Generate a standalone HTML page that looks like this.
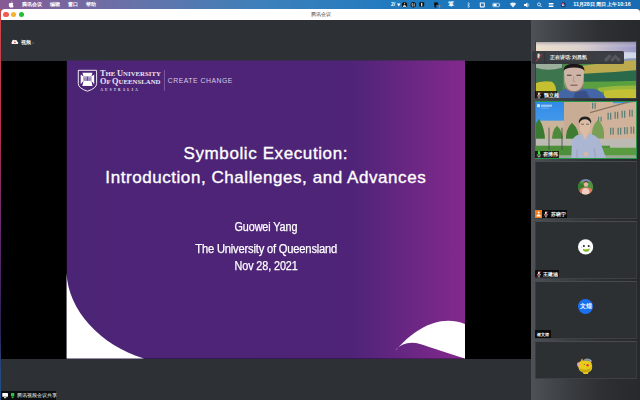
<!DOCTYPE html>
<html><head><meta charset="utf-8">
<style>
*{margin:0;padding:0;box-sizing:border-box}
html,body{width:640px;height:400px;overflow:hidden;background:#2d3034;font-family:"Liberation Sans",sans-serif}
.a{position:absolute}
#menubar{left:0;top:0;width:640px;height:20px;background:linear-gradient(90deg,#875a94 0%,#6872a8 20.3%,#3f80ba 40%,#1f7ac0 62.5%,#1a6fb4 88%,#1a6cb2 100%)}
#wallL{left:0;top:9px;width:1px;height:391px;background:linear-gradient(180deg,#d04a48 0%,#b83050 30%,#6a2a70 55%,#2a2050 82%,#24487e 92%,#1f4f8f 100%)}
#wallR{left:639px;top:10px;width:1px;height:4px;background:#1f78c6}
#win{left:1px;top:9.1px;width:639px;height:391px;background:#2d3034;border-radius:3.5px 3.5px 0 0;overflow:hidden}
#title{left:0;top:0;width:639px;height:10.7px;background:#fff}
.tl{top:3.2px;width:5.2px;height:5.2px;border-radius:50%}
.mt{color:#fff;font-size:5.2px;top:2.2px;line-height:5.5px;white-space:nowrap;font-weight:bold}
.st{left:66.6px;width:398.4px;text-align:center;color:#fff;white-space:nowrap;line-height:1}
.sx{display:inline-block;-webkit-text-stroke:.25px #fff}
.tile{left:535px;width:102px;background:#2d3033;overflow:hidden;border:1px solid;border-color:#474a4f #36393d #3d4044 #3a3d41}
.lt{font-size:4.6px;line-height:5.5px;color:#fff;white-space:nowrap;font-weight:bold}
.lab{background:rgba(0,0,0,.78);height:7.3px;color:#fff;font-size:5.5px;line-height:7px;white-space:nowrap;overflow:hidden}
</style></head><body>
<div id="menubar" class="a"></div>
<!-- menu text -->
<svg class="a" style="left:0;top:0" width="640" height="10" viewBox="0 0 640 10">
  <path d="M11,3.2 C10.2,2.6 8.8,2.8 8.8,4.8 C8.8,6.4 9.8,7.6 10.4,7.6 C10.8,7.6 11,7.4 11.3,7.4 C11.6,7.4 11.9,7.6 12.3,7.6 C12.9,7.6 13.5,6.4 13.6,6 C12.6,5.4 12.8,4 13.4,3.4 C12.8,2.6 11.8,2.8 11,3.2 Z M11.1,2.8 C11.1,2 11.7,1.6 12.1,1.6 C12.1,2.3 11.6,2.8 11.1,2.8 Z" fill="#fff"/>
</svg>
<div class="a mt" style="left:21.5px;font-weight:bold">腾讯会议</div>
<div class="a mt" style="left:49.8px">编辑</div>
<div class="a mt" style="left:67.9px">窗口</div>
<div class="a mt" style="left:85.9px">帮助</div>
<!-- status icons -->
<div class="a mt" style="left:391px;font-size:5px">2/</div>
<svg class="a" style="left:380px;top:0" width="260" height="10" viewBox="380 0 260 10">
  <path d="M397,3.5 L400.5,3.5 L398.8,6.5 Z" fill="#fff"/>
  <circle cx="404.5" cy="4.8" r="2.7" fill="#151515"/><path d="M403,6.6 Q404.5,4 406,6.6 Z M404.5,2.8 V4.2" stroke="#eee" stroke-width=".7" fill="#eee"/>
  <circle cx="413.3" cy="4.8" r="2.7" fill="#151515"/><path d="M412.3,3 Q411.6,5 412.8,6.6 M414.2,3.4 V6.4" stroke="#eee" stroke-width=".8" fill="none"/>
  <path d="M419.2,2.3 H424.2 V6 Q421.7,8.2 419.2,6 Z" fill="#151515"/><rect x="421" y="3" width="1.3" height="3.4" fill="#ddd"/>
  <path d="M434,2.6 L437.5,2.2 L438.5,4.5 L436,5.2 L436.5,7.5 L434.5,7.5 Z" fill="#111"/>
  <path d="M439.5,5 L439.5,8.5 M438.3,6.3 L439.5,5 L440.7,6.3" stroke="#f06a1a" stroke-width=".9" fill="none"/>
  <path d="M468.2,2.6 L469.8,4 L468.2,5.2 L469.8,6.4 L468.2,7.6 Z" fill="none" stroke="#fff" stroke-width=".5"/>
  <rect x="479.8" y="2.4" width="5" height="5" rx=".8" fill="#fff"/><rect x="480.8" y="3.4" width="3" height="3" fill="#2a76c2"/>
  <rect x="492.8" y="3.3" width="6.5" height="3.4" rx=".6" fill="none" stroke="#fff" stroke-width=".6"/><rect x="493.4" y="3.9" width="3.2" height="2.2" fill="#fff"/><rect x="499.5" y="4.3" width=".6" height="1.4" fill="#fff"/>
  <path d="M509.8,3.8 Q513,1 516.2,3.8 L513,7.4 Z" fill="#fff" opacity=".9"/>
  <path d="M524,4 H525.5 L527.5,2.5 V7.5 L525.5,6 H524 Z" fill="#fff"/><path d="M528.3,3.5 Q529.4,5 528.3,6.5" stroke="#fff" stroke-width=".5" fill="none"/>
  <circle cx="539" cy="4.4" r="1.5" fill="none" stroke="#fff" stroke-width=".7"/><path d="M540.1,5.5 L541.6,7" stroke="#fff" stroke-width=".8"/>
  <rect x="548.6" y="3" width="5" height="1.4" rx=".7" fill="#fff"/><rect x="548.6" y="5.6" width="5" height="1.4" rx=".7" fill="#fff"/>
  <circle cx="563.3" cy="4.8" r="2.5" fill="#2a2a50"/><circle cx="562.8" cy="4.2" r="1.4" fill="#c03a90"/><circle cx="563" cy="5.3" r="1" fill="#e8e8ff"/><circle cx="564.2" cy="5.3" r=".7" fill="#3aa0d0"/>
</svg>
<div class="a mt" style="left:448px;font-weight:bold;font-size:5.5px">箪</div>
<div class="a mt" style="left:573.3px;font-size:5.3px;letter-spacing:-.04px">11月28日 周日 上午10:16</div>

<div id="wallL" class="a"></div>
<div id="wallR" class="a"></div>
<div id="win" class="a">
  <div id="title" class="a">
    <div class="a tl" style="left:2.4px;background:#f25a52"></div>
    <div class="a tl" style="left:9.9px;background:#f6b42c"></div>
    <div class="a tl" style="left:17.6px;background:#24c034"></div>
    <div class="a" style="left:310px;top:3px;font-size:4.9px;line-height:5.5px;color:#3c3c3c">腾讯会议</div>
  </div>
</div>
<!-- info line -->
<svg class="a" style="left:10px;top:38px" width="10" height="8" viewBox="10 38 10 8">
  <path d="M12.3,44.1 H17.4 C18.5,44.1 18.6,42.1 17.4,42 C17.5,40.4 15.9,39.5 14.7,40.3 C13.7,39.2 11.9,39.9 12.1,41.7 C11.1,41.9 11.2,44.1 12.3,44.1 Z" fill="#f4f4f4"/>
  <circle cx="14.9" cy="42.3" r=".9" fill="#e85050"/>
</svg>
<div class="a" style="left:21px;top:39.5px;font-size:5px;line-height:5.5px;color:#eee;white-space:nowrap;font-weight:bold">视频<span style="font-size:3.5px;color:#aaa;font-weight:normal"> ≈</span></div>

<!-- share area -->
<div class="a" style="left:1px;top:60.5px;width:530px;height:298.5px;background:#000"></div>
<svg class="a" style="left:0;top:0" width="640" height="400" viewBox="0 0 640 400">
  <defs>
    <linearGradient id="pg" x1="0" x2="1" y1="0" y2="0">
      <stop offset="0" stop-color="#4c2476"/>
      <stop offset="0.72" stop-color="#4f2478"/>
      <stop offset="1" stop-color="#84298e"/>
    </linearGradient>
  </defs>
  <rect x="66.8" y="60.5" width="398.2" height="298.2" fill="url(#pg)"/>
  <path d="M66.6,273 C68,310 100,345 144,358.6 L66.6,358.6 Z" fill="#fff"/>
  <path d="M395.4,350.7 C415,328 440,314 465,324 L465,358.6 C450,354 430,347 420,344 C410,341 400,344 395.4,350.7 Z" fill="#fff"/>
  <!-- crest -->
  <path d="M78.3,70.3 H96.6 V83.5 Q96.6,88.3 87.45,91.2 Q78.3,88.3 78.3,83.5 Z" fill="none" stroke="#fff" stroke-width=".9"/>
  <path d="M82.4,72.8 L92.5,72.8 L91.4,76.6 L94.2,74.6 L94.2,84.2 L91.4,80.7 L92.5,86 L82.4,86 L83.5,80.7 L80.7,84.2 L80.7,74.6 L83.5,76.6 Z" fill="#fff"/>
  <rect x="83.5" y="76.6" width="7.9" height="4.1" fill="#6a4a92"/>
  <path d="M84,77.5 H91 M84,78.65 H91 M84,79.8 H91" stroke="#fff" stroke-width=".45"/>
  <path d="M87.45,76.6 V80.7" stroke="#4c2476" stroke-width=".7"/>
  <line x1="164.4" y1="70" x2="164.4" y2="90.8" stroke="#9a82b8" stroke-width=".6"/>
</svg>
<div class="a" id="uq1" style="left:100px;top:70.2px;font-family:'Liberation Serif',serif;font-weight:bold;font-size:6.8px;line-height:7.7px;color:#ece4f2;white-space:nowrap;letter-spacing:0px"><span style="font-size:8.3px">T</span>HE <span style="font-size:8.3px">U</span>NIVERSITY<br><span style="font-size:8.3px">O</span>F <span style="font-size:8.3px">Q</span>UEENSLAND</div>
<div class="a" style="left:100.5px;top:87.6px;font-family:'Liberation Serif',serif;font-weight:bold;font-size:3.3px;line-height:4px;color:#f0e8f4;white-space:nowrap;letter-spacing:2.2px">AUSTRALIA</div>
<div class="a" style="left:167.8px;top:77.2px;font-size:6.8px;line-height:7px;color:#d8cde6;white-space:nowrap;letter-spacing:.54px">CREATE CHANGE</div>

<!-- slide text -->
<div class="a st" style="top:144.6px;font-size:17px;letter-spacing:.6px;-webkit-text-stroke:.35px #fff">Symbolic Execution:</div>
<div class="a st" style="top:168.8px;font-size:17px;letter-spacing:.56px;-webkit-text-stroke:.35px #fff">Introduction, Challenges, and Advances</div>
<div class="a st" style="top:221px;font-size:12px"><span class="sx" style="transform:scaleX(.9);letter-spacing:-.1px">Guowei Yang</span></div>
<div class="a st" style="top:243.3px;font-size:12px"><span class="sx" style="transform:scaleX(.93);letter-spacing:-.2px">The University of Queensland</span></div>
<div class="a st" style="top:260px;font-size:12px"><span class="sx" style="transform:scaleX(.9);letter-spacing:-.1px">Nov 28, 2021</span></div>

<!-- bottom-left label -->
<div class="a" style="left:1.4px;top:391.2px;width:55px;height:9px;background:rgba(0,0,0,.75)"></div>
<svg class="a" style="left:0;top:390px" width="20" height="10" viewBox="0 390 20 10">
  <rect x="2.3" y="393" width="5.7" height="3.8" rx=".4" fill="#fff"/><rect x="4" y="397.2" width="2.3" height="1" fill="#fff"/>
  <path d="M11,393 H14.3 V396 H11 Z M10.8,396.4 H14.5 L12.65,398.6 Z" fill="#2ec040"/>
</svg>
<div class="a" style="left:16.9px;top:393.2px;font-size:4.6px;line-height:5.5px;color:#fff;white-space:nowrap">腾讯视频会议共享</div>

<!-- right panel -->
<div class="a" style="left:531px;top:19.7px;width:109px;height:381px;background:linear-gradient(90deg,#4e5156 0%,#3a3d41 35%,#2d2f33 65%,#27292d 100%)"></div>

<!-- tile1 -->
<div class="a tile" style="top:41.3px;height:57.8px">
<svg width="100" height="56" viewBox="536 42.3 100 56" style="display:block">
  <defs>
    <linearGradient id="sky1" x1="0" x2="1" y1="0" y2="0"><stop offset="0" stop-color="#f0e2cc"/><stop offset=".45" stop-color="#dcd0cc"/><stop offset="1" stop-color="#9494c8"/></linearGradient>
    <linearGradient id="sky1v" x1="0" x2="0" y1="0" y2="1"><stop offset="0" stop-color="#5a5468" stop-opacity="1"/><stop offset=".5" stop-color="#7a7088" stop-opacity=".6"/><stop offset="1" stop-color="#fff" stop-opacity="0"/></linearGradient>
    <filter id="bl1" x="-10%" y="-10%" width="120%" height="120%"><feGaussianBlur stdDeviation=".7"/></filter>
  </defs>
  <g filter="url(#bl1)">
  <rect x="530" y="36" width="112" height="68" fill="url(#sky1)"/>
  <rect x="530" y="36" width="112" height="12" fill="url(#sky1v)"/>
  <path d="M596,54 Q620,52 642,53 V66 H596 Z" fill="#d2d8ea"/><path d="M620,60 Q630,58 642,59 V64 H620 Z" fill="#8a98b8"/>
  <rect x="530" y="62" width="112" height="42" fill="#4a8a48"/>
  <path d="M583,66 Q610,62 642,60 V72 Q612,75 583,75 Z" fill="#bcaa50"/>
  <path d="M583,74 Q612,73 642,70 V82 Q612,84 583,83 Z" fill="#2a6a4c"/>
  <path d="M583,82 Q612,82 642,81 V104 H583 Z" fill="#5aa040"/>
  <path d="M598,88 Q620,85 642,86 V91 Q620,93 598,92 Z" fill="#98b83a"/>
  <path d="M604,91 Q622,89 642,90 V104 H604 Z" fill="#c4c034"/>
  <path d="M530,62 H563 V104 H530 Z" fill="#3c7450"/>
  <path d="M536,62 L562,62 L562,68 Q548,72 536,68 Z" fill="#c4c8bc" opacity=".7"/>
  <path d="M530,86 Q540,80 552,82 Q557,86 556,94 L530,96 Z" fill="#c4c030"/>
  <path d="M530,94 H562 V104 H530 Z" fill="#3a5a38"/>
  <!-- man -->
  <path d="M554,104 Q556,91 566,89 L594,89 Q604,91 608,104 Z" fill="#4466a6"/>
  <path d="M576,91 L586,91 L590,99 L573,99 Z" fill="#2a3a6a" opacity=".5"/>
  <path d="M564,71 Q564,65 574,65 Q584,65 584,71 L583.5,84 Q582,91.5 574,91.5 Q565,91.5 564.5,84 Z" fill="#cdb4a6"/>
  <path d="M565,82 Q567,91.5 574,91.5 Q581,91.5 583.5,82 L583.5,86 Q581,92.5 574,92.5 Q567,92.5 565,86 Z" fill="#9a7a6a" opacity=".8"/>
  <path d="M563.5,71.5 Q563,64 574,64 Q585,64 584.5,71.5 Q583,67.8 574,67.8 Q565,67.8 563.5,71.5 Z" fill="#1a1616"/>
  <path d="M567,75.5 H571.5 M576.5,75.5 H581" stroke="#4a3430" stroke-width="1.1"/>
  <path d="M570.5,85.5 H577.5" stroke="#8a5a52" stroke-width="1.2"/>
  <path d="M574,76.5 L573.2,81.5 L575.5,82" stroke="#a08070" stroke-width=".6" fill="none"/>
  </g>
</svg>
</div>
<!-- speaking overlay -->
<div class="a" style="left:531.6px;top:51.1px;width:92.2px;height:13.3px;background:rgba(52,55,60,.96);border-radius:1.5px"></div>
<svg class="a" style="left:531px;top:50px" width="95" height="16" viewBox="531 50 95 16">
  <path d="M537.5,54.5 Q537.5,53.4 538.6,53.4 Q539.7,53.4 539.7,54.5 V57.5 Q539.7,58.6 538.6,58.6 Q537.5,58.6 537.5,57.5 Z" fill="#ddd"/>
  <path d="M536,61.5 L541.8,54" stroke="#e83a3a" stroke-width=".8"/>
  <line x1="544.8" y1="52" x2="544.8" y2="63.5" stroke="#2a2c30" stroke-width=".6"/>
  <path d="M603.8,59.6 L609.4,54.2 L611.8,56.4 L606.2,62 Z" fill="#55585d"/>
  <path d="M610.2,59.8 L615.2,54.4 L620.8,59.8 L618.6,62 L615.2,58.6 L612.4,62 Z" fill="#55585d"/>
</svg>
<div class="a" style="left:549.5px;top:55.2px;font-size:4.7px;line-height:5.5px;color:#f0f0f0;white-space:nowrap;font-weight:bold">正在讲话: 刘昌凯</div>
<!-- tile1 label -->
<div class="a lab" style="left:535.3px;top:91.2px;width:22.2px"></div>
<svg class="a" style="left:534.6px;top:90.8px" width="8" height="8" viewBox="534.6 90.8 8 8"><rect x="537.65" y="92.2" width="1.9" height="3.3" rx=".95" fill="#f2f2f2"/><path d="M536.9,94.6 Q536.9,96.7 538.6,96.7 Q540.3000000000001,96.7 540.3000000000001,94.6 M538.6,96.7 V97.7 M537.6,97.7 H539.6" stroke="#e8e8e8" stroke-width=".55" fill="none"/><path d="M536.4,97.5 L540.8000000000001,92.1" stroke="#e03030" stroke-width=".75"/></svg>
<div class="a lt" style="left:543.5px;top:92.9px">魏立超</div>

<!-- tile2 -->
<div class="a tile" style="top:101.3px;height:57.8px;border-color:#23964a">
<svg width="100" height="56" viewBox="536 102.3 100 56" style="display:block">
  <defs>
    <linearGradient id="sky2" x1="0" x2="0" y1="0" y2="1"><stop offset="0" stop-color="#2a86e6"/><stop offset="1" stop-color="#6ab6f2"/></linearGradient>
    <filter id="bl2" x="-10%" y="-10%" width="120%" height="120%"><feGaussianBlur stdDeviation=".6"/></filter>
  </defs>
  <g filter="url(#bl2)">
  <rect x="530" y="96" width="112" height="66" fill="url(#sky2)"/>
  <rect x="540" y="121" width="26" height="24" fill="#cab49c"/>
  <path d="M564,96 H642 V146 H564 Z" fill="#d0b29a"/>
  <path d="M564,96 H590 V146 H564 Z" fill="#c8ac94"/>
  <path d="M613,96 H629 V103.5 H613 Z" fill="#3a94e8"/>
  <path d="M590,113 L628,102.5 L642,101" stroke="#8a7464" stroke-width="1.3" fill="none"/>
  <g fill="#5e8078">
    <rect x="592" y="103" width="1.3" height="6"/><rect x="594.5" y="103" width="1.3" height="6"/>
    <rect x="598" y="117" width="1.2" height="5"/><rect x="600.5" y="117" width="1.2" height="5"/>
    <rect x="607.5" y="113" width="1.3" height="7"/><rect x="610" y="113" width="1.3" height="7"/>
    <rect x="614.5" y="112" width="1.3" height="7"/><rect x="617" y="112" width="1.3" height="7"/>
    <rect x="621.5" y="111" width="1.3" height="7"/><rect x="624" y="111" width="1.3" height="7"/>
    <rect x="629" y="110" width="1.3" height="7"/><rect x="631.5" y="110" width="1.3" height="7"/>
    <rect x="610" y="128" width="1.3" height="7"/><rect x="612.5" y="128" width="1.3" height="7"/>
    <rect x="617.5" y="128" width="1.3" height="7"/><rect x="620" y="128" width="1.3" height="7"/>
    <rect x="624" y="127.5" width="1.3" height="7"/><rect x="626.5" y="127.5" width="1.3" height="7"/>
    <rect x="630.5" y="127" width="1.3" height="7"/><rect x="633" y="127" width="1.3" height="7"/>
  </g>
  <path d="M530,146 Q532,128 539,119 Q546,130 545,146 Z" fill="#3a7a30"/>
  <path d="M552,145 Q551,131 557,126 Q564,132 563,145 Z" fill="#4e8a3a"/>
  <path d="M566,143 Q565,129 572,123 Q580,130 579,143 Z" fill="#3e7c32"/>
  <path d="M592,139 Q591,126 598,120 Q605,126 604,139 Z" fill="#6a9a48" opacity=".85"/>
  <rect x="530" y="139" width="112" height="10" fill="#bcbab2"/>
  <rect x="530" y="146" width="80" height="12" fill="#4e8e3a"/>
  <path d="M600,148 H642 V162 H600 Z" fill="#5a9a40"/>
  <rect x="530" y="155.5" width="112" height="6" fill="#a8aca8" opacity=".8"/>
  <path d="M549,128 V150 M562,128 V150" stroke="#444" stroke-width=".8"/>
  <!-- man -->
  <path d="M571,162 L572,142 Q573,136 580,134.5 L591,134.5 Q598,136 600,142 L606,158 L607,162 Z" fill="#aab6d2"/><path d="M582,134.5 L585,140 L588,134.5 Z" fill="#dcbca4"/><path d="M577,150 L577,162 M594,148 L596,162" stroke="#8a96b4" stroke-width=".6"/>
  <path d="M579.5,124 Q579.5,118 585,118 Q590.5,118 590.5,124 L590,131 Q588,135.5 585,135.5 Q582,135.5 580,131 Z" fill="#dcbca4"/>
  <path d="M579,124 Q578,117 585,116.8 Q592,117 591,124 Q589.5,119.5 585,119.5 Q580.5,119.5 579,124 Z" fill="#222"/>
  <path d="M581,124.5 H584 M586,124.5 H589" stroke="#333" stroke-width=".6"/>
  <circle cx="586" cy="154.5" r="2.2" fill="#d8b8a0"/>
  </g>
  <rect x="537" y="104.5" width="3" height="3" fill="#fff" opacity=".75"/>
  <rect x="541" y="105" width="11" height="2" fill="#fff" opacity=".55"/>
  <rect x="541" y="108" width="8" height=".8" fill="#fff" opacity=".35"/>
</svg>
</div>
<div class="a lab" style="left:535.3px;top:150.6px;width:24px"></div>
<svg class="a" style="left:534.8px;top:150.3px" width="8" height="8" viewBox="534.8 150.3 8 8"><rect x="537.6999999999999" y="151.4" width="2.2" height="3.6" rx="1" fill="#3ae23a"/><path d="M537.0,154.5 Q537.0,156.3 538.8,156.3 Q540.5999999999999,156.3 540.5999999999999,154.5 M538.8,156.3 V157.10000000000002 M537.5,157.10000000000002 H540.0999999999999" stroke="#f0f0f0" stroke-width=".55" fill="none"/></svg>
<div class="a lt" style="left:543.2px;top:152.3px">崔博伟</div>

<!-- tile3 -->
<div class="a tile" style="top:161.3px;height:57.8px"></div>
<svg class="a" style="left:577px;top:178px" width="18" height="18" viewBox="577 178 18 18">
  <defs><clipPath id="c3"><circle cx="585.6" cy="186.9" r="7.6"/></clipPath></defs>
  <g clip-path="url(#c3)">
    <rect x="577" y="178" width="18" height="18" fill="#4e9440"/>
    <rect x="577" y="178" width="18" height="3.5" fill="#8084c8"/>
    <path d="M577,184 Q581,182 584,185 L584,196 H577 Z" fill="#3a7a30"/>
    <path d="M579,196 Q578,188 584,187.5 L588,187.5 Q594,188 593,196 Z" fill="#e07a60"/>
    <path d="M582,192 Q582,188 585.5,188 Q589,188 589.5,192 L589,195 H582 Z" fill="#f2cfc4"/>
    <ellipse cx="586" cy="184.2" rx="2.2" ry="2.6" fill="#e2b8a0"/>
    <path d="M583.8,183.5 Q584,180.8 586,180.8 Q588.2,180.8 588.3,183.5 Q587,182 586,182.2 Q585,182 583.8,183.5 Z" fill="#5a4030"/>
  </g>
</svg>
<div class="a" style="left:535.3px;top:210.1px;width:6.6px;height:7.6px;background:#f27a18"></div>
<svg class="a" style="left:535px;top:210px" width="8" height="9" viewBox="535 210 8 9"><circle cx="538.6" cy="212.5" r="1" fill="#fff"/><path d="M536.4,216.6 Q536.6,214.3 538.6,214.3 Q540.6,214.3 540.8,216.6 Z" fill="#fff"/></svg>
<div class="a lab" style="left:541.9px;top:210.3px;width:24.8px"></div>
<svg class="a" style="left:542.2px;top:209.9px" width="8" height="8" viewBox="542.2 209.9 8 8"><rect x="545.25" y="211.3" width="1.9" height="3.3" rx=".95" fill="#f2f2f2"/><path d="M544.5,213.70000000000002 Q544.5,215.8 546.2,215.8 Q547.9000000000001,215.8 547.9000000000001,213.70000000000002 M546.2,215.8 V216.8 M545.2,216.8 H547.2" stroke="#e8e8e8" stroke-width=".55" fill="none"/><path d="M544.0,216.6 L548.4000000000001,211.20000000000002" stroke="#e03030" stroke-width=".75"/></svg>
<div class="a lt" style="left:550.8px;top:212.0px">苏晓宁</div>

<!-- tile4 -->
<div class="a tile" style="top:221.3px;height:57.8px"></div>
<svg class="a" style="left:577px;top:238px" width="18" height="18" viewBox="577 238 18 18">
  <circle cx="585.6" cy="246.9" r="7.6" fill="#fff"/>
  <circle cx="583.9" cy="246" r="1" fill="#222"/><circle cx="588.7" cy="246" r="1" fill="#222"/>
  <path d="M582.8,248.8 Q586.2,250 589.8,248.6 Q589.5,251.6 586.2,251.8 Q583,251.6 582.8,248.8 Z" fill="#6ab828"/>
  <path d="M584,249.4 Q586.2,250.2 588.6,249.3" stroke="#e0d040" stroke-width=".6" fill="none"/>
  <circle cx="581.3" cy="247.5" r=".4" fill="#888"/><circle cx="590.6" cy="247" r=".4" fill="#888"/>
</svg>
<div class="a lab" style="left:535.3px;top:270.2px;width:23.7px"></div>
<svg class="a" style="left:535px;top:269.8px" width="8" height="8" viewBox="535 269.8 8 8"><rect x="538.05" y="271.2" width="1.9" height="3.3" rx=".95" fill="#f2f2f2"/><path d="M537.3,273.6 Q537.3,275.7 539,275.7 Q540.7,275.7 540.7,273.6 M539,275.7 V276.7 M538,276.7 H540" stroke="#e8e8e8" stroke-width=".55" fill="none"/><path d="M536.8,276.5 L541.2,271.1" stroke="#e03030" stroke-width=".75"/></svg>
<div class="a lt" style="left:543px;top:271.9px">王建涵</div>

<!-- tile5 -->
<div class="a tile" style="top:281.3px;height:57.8px"></div>
<div class="a" style="left:577.7px;top:298.6px;width:15.6px;height:15.6px;border-radius:50%;background:#1b70f2"></div>
<div class="a" style="left:578.5px;top:303.2px;width:14px;text-align:center;font-size:5.5px;line-height:6px;color:#fff;white-space:nowrap;font-weight:bold">文煌</div>
<div class="a lab" style="left:535.3px;top:330.3px;width:16px"></div>
<div class="a lt" style="left:536.6px;top:332.2px;font-size:4.3px">谢文煌</div>

<!-- tile6 -->
<div class="a tile" style="top:341.3px;height:37.8px"></div>
<svg class="a" style="left:574px;top:355px" width="22" height="22" viewBox="574 355 22 22">
  <path d="M578.2,366 Q577.8,360.5 584.5,360.2 Q591.8,359.8 592.2,365.5 Q592.6,371 588.5,372.2 L587.8,374 L583.6,374 L583,372.4 Q578.4,371.2 578.2,366 Z" fill="#e8cc1c"/>
  <path d="M579.5,368 Q584,371.5 591,368 Q590,372 585.5,372.5 Q580.5,372 579.5,368 Z" fill="#c8a810"/>
  <path d="M580.5,361.5 L581.8,358.6 L583.6,360.6 Z" fill="#e0a030"/>
  <path d="M583.8,359.8 Q586.5,357.6 589.8,359 L590.8,361 Q587,360.2 584,361 Z" fill="#8a98a8"/>
  <path d="M589.5,359.5 Q591.5,359.2 591.8,361.5 L590.5,362 Z" fill="#b8c0c8"/>
  <ellipse cx="578.6" cy="364.6" rx="1.5" ry="2.4" fill="#e8a8b0"/>
  <circle cx="587.6" cy="365.3" r="1.2" fill="#e83838"/>
  <circle cx="584.2" cy="364.4" r=".5" fill="#5a4a10"/>
  <path d="M591.8,364 L592.8,366.5 L591.8,368" stroke="#3a3a3a" stroke-width=".5" fill="none"/>
</svg>
</body></html>
